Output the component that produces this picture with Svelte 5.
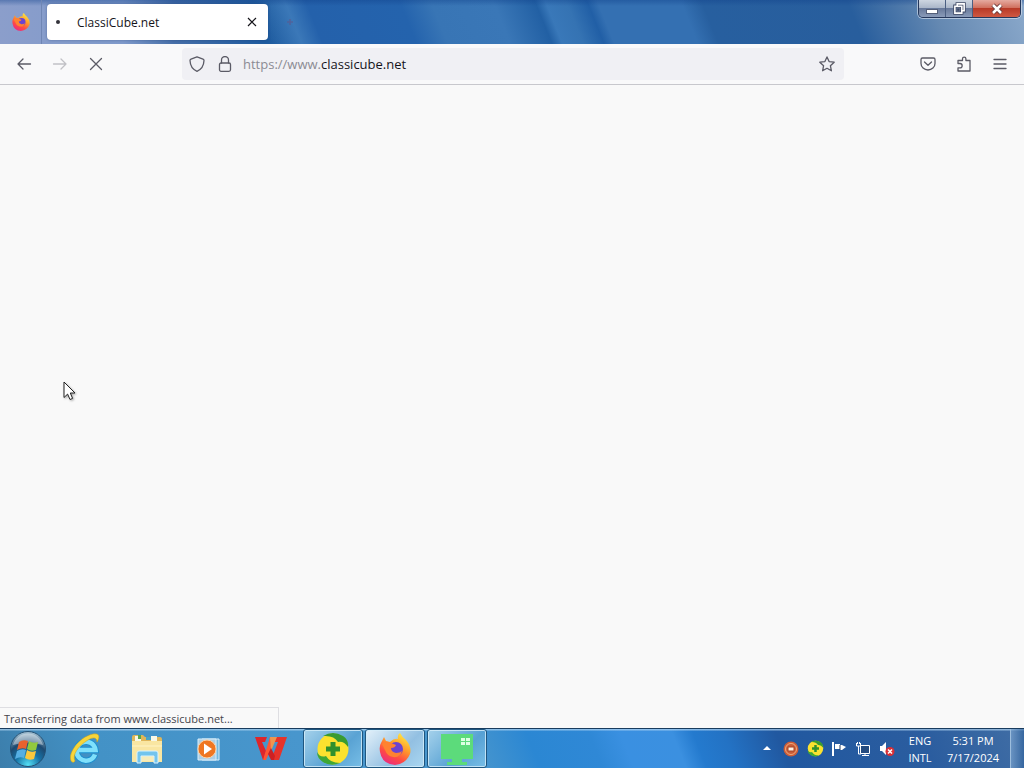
<script lang="ts">
    let tabTitle = $state("ClassiCube.net");
    let host = $state("classicube.net");
    let status = $state("Transferring data from www.classicube.net...");
</script>

<div class="desktop">
    <header class="titlebar">
        <button class="firefox-view" aria-label="Firefox View">
            {@render firefox(18)}
        </button>
        <div class="tab">
            <span class="throbber"></span>
            <span class="tab-title">{tabTitle}</span>
            <button class="tab-close" aria-label="Close tab">
                <svg width="10" height="10" viewBox="0 0 10 10" fill="none" stroke="#15141a" stroke-width="1.2">
                    <path d="M1 1l8 8M9 1L1 9" />
                </svg>
            </button>
        </div>
        <button class="new-tab" aria-label="New tab">
            <svg width="10" height="10" viewBox="0 0 10 10" stroke="#6a4f80" stroke-width="1.5">
                <path d="M5 2v6M2 5h6" />
            </svg>
        </button>
        <div class="window-controls">
            <button class="control" aria-label="Minimize">
                <svg width="14" height="14" viewBox="0 0 14 14">
                    <rect x="1.5" y="7.5" width="11" height="4" fill="#fff" stroke="#535e78" />
                </svg>
            </button>
            <button class="control" aria-label="Restore">
                <svg width="13" height="13" viewBox="0 0 14 14" fill="none">
                    <path d="M4.500 4V2h7.500v7.500h-2M2 4.500h7.500V12H2z" stroke="#414b66" stroke-width="3.500" />
                    <path d="M4.500 4V2h7.500v7.500h-2M2 4.500h7.500V12H2z" stroke="#fff" stroke-width="1.700" />
                    <path d="M4.500 7h2.500v2.500H4.500z" fill="#414b66" />
                </svg>
            </button>
            <button class="control close" aria-label="Close">
                <svg width="14" height="14" viewBox="0 0 14 14" fill="none">
                    <path d="M3 3l8 8M11 3l-8 8" stroke="#6b3838" stroke-width="4.5" />
                    <path d="M3 3l8 8M11 3l-8 8" stroke="#fff" stroke-width="2.5" />
                </svg>
            </button>
        </div>
    </header>

    <nav class="toolbar">
        <div class="nav-buttons">
            <button class="tool" aria-label="Back">
                <svg class="icon" viewBox="0 0 16 16"><path d="M14.500 8H2M7 3L2 8l5 5" /></svg>
            </button>
            <button class="tool" aria-label="Forward" disabled>
                <svg class="icon" viewBox="0 0 16 16"><path d="M1.500 8H14M9 3l5 5-5 5" /></svg>
            </button>
            <button class="tool" aria-label="Stop">
                <svg class="icon" viewBox="0 0 16 16"><path d="M2.500 2.500l11 11M13.500 2.500l-11 11" /></svg>
            </button>
        </div>
        <div class="urlbar">
            <button class="tool small" aria-label="Tracking protection">
                <svg class="icon" viewBox="0 0 16 16">
                    <path d="M8 .8l6 2.300c.8.3 1 .8 1 1.500C14.800 10 12.500 13.500 8 15.300 3.500 13.500 1.200 10 1 4.600c0-.7.2-1.200 1-1.500z" />
                </svg>
            </button>
            <button class="tool small" aria-label="Site information">
                <svg class="icon" viewBox="0 0 16 16">
                    <path d="M4.500 7V4a3.500 3.500 0 0 1 7 0v3" />
                    <rect x="2.500" y="7" width="11" height="8.300" rx="1.500" />
                </svg>
            </button>
            <label class="scheme" for="url">https://www.</label>
            <input id="url" type="text" bind:value={host} spellcheck="false" />
            <button class="tool small" aria-label="Bookmark this page">
                <svg class="icon" viewBox="0 0 16 16">
                    <path d="M8 .9l2.100 4.700 5.100.6-3.800 3.500 1 5.100L8 12.300l-4.400 2.500 1-5.100L.8 6.200l5.100-.6z" />
                </svg>
            </button>
        </div>
        <div class="menu-buttons">
            <button class="tool" aria-label="Save to Pocket">
                <svg class="icon" viewBox="0 0 16 16">
                    <path d="M2.500 2h11A1.500 1.500 0 0 1 15 3.500V7.500a7 6.500 0 0 1-14 0V3.500A1.500 1.500 0 0 1 2.500 2z" />
                    <path d="M4.500 6L8 9.300 11.500 6" />
                </svg>
            </button>
            <button class="tool" aria-label="Extensions">
                <svg class="icon" viewBox="0 0 16 16">
                    <path d="M2 7.500V4.500h4.500V2.800a1.700 1.700 0 0 1 3.400 0v1.700H14V15H2v-3.200h2a2.100 2.100 0 0 0 0-4.300z" />
                </svg>
            </button>
            <button class="tool" aria-label="Open application menu">
                <svg class="icon" viewBox="0 0 16 16"><path d="M2 3.500h12M2 8h12M2 12.500h12" /></svg>
            </button>
        </div>
    </nav>

    <main class="page">
        <svg class="cursor" width="14" height="21" viewBox="0 0 14 21">
            <path d="M1 1v15.500l3.600-3.400 2.400 5.400 2.600-1.100-2.300-5.400H12z" fill="#fff" stroke="#222" />
        </svg>
        <div class="status" role="status">{status}</div>
    </main>

    <footer class="taskbar">
        <button class="start" aria-label="Start">
            <svg width="38" height="38" viewBox="0 0 38 38">
                <defs>
                    <radialGradient id="orb" cx="50%" cy="95%" r="90%">
                        <stop offset="0" stop-color="#55e0f5" />
                        <stop offset=".4" stop-color="#1672a6" />
                        <stop offset=".7" stop-color="#1d4970" />
                        <stop offset="1" stop-color="#9bb9cc" />
                    </radialGradient>
                </defs>
                <circle cx="19" cy="19" r="17.500" fill="url(#orb)" stroke="#245073" />
                <path d="M4 15A15.500 15.500 0 0 1 34 15Q19 10 4 15z" fill="#fff" opacity=".4" />
                <path d="M10 12q4-3 9-1l-2 8q-4-2-9 1z" fill="#e9622d" />
                <path d="M20 11q4 3 9 1l-2 8q-5 2-9-1z" fill="#91c83e" />
                <path d="M8 21q5-3 9-1l-2 8q-4-2-9 1z" fill="#56afe4" />
                <path d="M18 20q4 3 9 1l-2 8q-5 2-9-1z" fill="#fbc83d" />
            </svg>
        </button>
        <div class="apps">
            <button class="app" aria-label="Internet Explorer">
                <svg width="32" height="32" viewBox="0 0 32 32" fill="none">
                    <path d="M26 21.500A9.500 9.500 0 1 1 26.500 17H9" stroke="#1b8fd0" stroke-width="6.500" />
                    <path d="M26 21.500A9.500 9.500 0 1 1 26.500 17H9" stroke="#7fe0fb" stroke-width="4.500" />
                    <path d="M3 29C-3 23 9 4 24 1c7-1 7 3 4 8 0-5-4-5-9-2C9 13 3 22 6 28q-1 2-3 1z" fill="#f7d53a" stroke="#c99e1d" stroke-width=".5" />
                </svg>
            </button>
            <button class="app" aria-label="Windows Explorer">
                <svg width="32" height="32" viewBox="0 0 32 32">
                    <path d="M1 4q0-2 2-2h9l2 2h15q2 0 2 2v20H1z" fill="#dfb65a" />
                    <path d="M4 3h6v6H4zM20 3h6v6h-6z" fill="#f8f8e8" />
                    <path d="M7 2h3v4H7z" fill="#58a64b" />
                    <path d="M15 4h5v3h-5z" fill="#49a3c6" />
                    <path d="M1 8h30v21H1z" fill="#f9e6a2" />
                    <path d="M1 13h30" stroke="#fff4c6" />
                    <path d="M6 30V20q0-2 2-2h17q2 0 2 2v10h-4v-7H10v7z" fill="#72c4ed" stroke="#d9f3ff" />
                    <path d="M11 24h11v4H11z" fill="#f6ebba" />
                </svg>
            </button>
            <button class="app" aria-label="Windows Media Player">
                <svg width="32" height="32" viewBox="0 0 32 32">
                    <path d="M9 6h17v21H9z" fill="#72b9df" stroke="#d9eefa" />
                    <path d="M5 6h18v21H5z" fill="#accee5" stroke="#d9eefa" />
                    <circle cx="14" cy="16" r="9" fill="#ef7621" stroke="#ffd2a3" />
                    <path d="M11 10.500v11l8-5.500z" fill="#fff" />
                </svg>
            </button>
            <button class="app" aria-label="WPS Office">
                <svg width="32" height="32" viewBox="0 0 32 32">
                    <path d="M0 4h12l-2 5H7l4 9-1 9H8z" fill="#dd262b" />
                    <path d="M20 4h12l-8 23h-8l7-18h-5z" fill="#e6332b" />
                    <path d="M15 4h6l-10 23H8z" fill="#ff5634" />
                    <path d="M15 4h7l-6 14z" fill="#ed9650" />
                    <path d="M16 15l4 8-1 4h-3l-3-6z" fill="#ce2022" />
                </svg>
            </button>
            <button class="app running" aria-label="360 Total Security">
                {@render shield(34)}
            </button>
            <button class="app running active" aria-label="Firefox">
                {@render firefox(32)}
            </button>
            <button class="app running" aria-label="Remote Desktop">
                <svg width="32" height="32" viewBox="0 0 32 32">
                    <path d="M0 1h32v25H21v3h5v3H6v-3h5v-3H0z" fill="#5cdb7b" />
                    <path d="M20 5h4v3h-4zM25 5h4v3h-4zM20 9h4v3h-4zM25 9h4v3h-4z" fill="#dcffe2" />
                </svg>
            </button>
        </div>
        <div class="tray">
            <button class="tray-icon" aria-label="Show hidden icons">
                <svg width="8" height="5" viewBox="0 0 8 5"><path d="M4 0l4 4H0z" fill="#fff" /></svg>
            </button>
            <button class="tray-icon" aria-label="Screen recorder">
                <svg width="16" height="16" viewBox="0 0 16 16">
                    <circle cx="8" cy="8" r="7.500" fill="#cb5c38" />
                    <circle cx="8" cy="8" r="5.500" fill="none" stroke="#efaa79" />
                    <path d="M5 6h6v4H5z" fill="#fff2e2" stroke="#a44426" />
                </svg>
            </button>
            <button class="tray-icon" aria-label="360 Total Security">
                {@render shield(17)}
            </button>
            <button class="tray-icon" aria-label="Action Center">
                <svg width="16" height="16" viewBox="0 0 16 16" fill="#fff">
                    <path d="M1 1h2v14H1zM4 3h5v1h2l4 2-4 3H9V8H4z" />
                    <path d="M9 4v5" stroke="#253b60" />
                </svg>
            </button>
            <button class="tray-icon" aria-label="Network">
                <svg width="16" height="16" viewBox="0 0 16 16" fill="none" stroke="#fff">
                    <path d="M5.500 4.500h9v8h-9z" fill="#244b80" />
                    <path d="M7 14.500h7M10 12.500v2" />
                    <path d="M1.500 2v3h4V2M2.500 1v2M4.500 1v2M3.500 5v8H6" />
                </svg>
            </button>
            <button class="tray-icon" aria-label="Volume muted">
                <svg width="16" height="16" viewBox="0 0 16 16">
                    <path d="M1 5h2l4-4v13l-4-4H1z" fill="#fff" />
                    <circle cx="11" cy="10.500" r="4.500" fill="#d92f36" />
                    <path d="M9 8.500l4 4M13 8.500l-4 4" stroke="#fff" stroke-width="1.500" />
                </svg>
            </button>
            <button class="tray-text language"><span>ENG</span><span>INTL</span></button>
            <button class="tray-text clock"><span>5:31 PM</span><span>7/17/2024</span></button>
            <button class="show-desktop" aria-label="Show desktop"></button>
        </div>
    </footer>
</div>

{#snippet firefox(size: number)}
    <svg width={size} height={size} viewBox="0 0 32 32">
        <defs>
            <linearGradient id="fox{size}" x1=".8" y1="0" x2=".25" y2="1">
                <stop offset="0" stop-color="#fff044" />
                <stop offset=".4" stop-color="#ff9a2b" />
                <stop offset=".7" stop-color="#ff4b43" />
                <stop offset="1" stop-color="#e82986" />
            </linearGradient>
        </defs>
        <path d="M2 10q2-4 3-6l2 4 4 1Q15 5 19 6q-1-4 2-6 2 4 6 7 6 7 4 14-4 10-15 11Q3 31 1 19 0 13 2 10z" fill="url(#fox{size})" />
        <circle cx="17" cy="16" r="7" fill="#6b43d0" />
        <path d="M3 11q4-4 9-1l5 2q-1 3-5 3 0 4 5 5 4 0 6-2-2 7-9 6-6-1-8-7z" fill="#ff8230" />
    </svg>
{/snippet}

<!-- round badge: yellow disc, two green swooshes, green plus -->
{#snippet shield(size: number)}
    <svg width={size} height={size} viewBox="0 0 34 34">
        <circle cx="17" cy="17" r="15.500" fill="#fbe22f" />
        <path d="M7 4Q17-2 27 4q6 4 5 11-4-6-10-5Q18 3 7 4z" fill="#3a9b32" />
        <path d="M1 20q3 6 9 4 4 7 14 7-9 4-17-1-6-4-6-10z" fill="#3fa736" />
        <path d="M14.500 10h5v4.500h4.500v5h-4.500v4.500h-5v-4.500H10v-5h4.500z" fill="#30902d" />
    </svg>
{/snippet}

<style>
    :global(body) {
        margin: 0;
    }

    .desktop {
        display: flex;
        flex-direction: column;
        height: 100vh;
        overflow: hidden;
        font-family: "Open Sans", "Noto Sans", sans-serif;
        font-size: 12px;
        color: #15141a;
    }

    button {
        display: flex;
        align-items: center;
        justify-content: center;
        box-sizing: border-box;
        padding: 0;
        border: none;
        background: none;
        color: inherit;
        font: inherit;
    }

    svg {
        display: block;
        flex-shrink: 0;
    }

    .titlebar {
        display: flex;
        flex-shrink: 0;
        height: 44px;
        background:
            linear-gradient(#10408a66, transparent 6px),
            linear-gradient(68deg, transparent 26%, #3b78b8 29%, #2461ab 31%, #2463ad 40%, #3875b5 43%, #3a77b7 49%, #2260a4 53%, #3978b9 54%, #3573b3 56%, #215fa6 58%, #3470b2 59%, #3470b2 67%, #275f9f 69%, #285e9d 83%, #6589b2 91%, #8ba9cb),
            linear-gradient(90deg, #8b9ecb, #7f9acb 12%, #466fa8 17%, #1f5c9f 26%, #2565af 40%);
    }

    .firefox-view {
        width: 42px;
        border-right: 1px solid #6f86b4;
    }

    .tab {
        display: flex;
        align-items: center;
        box-sizing: border-box;
        width: 221px;
        margin: 4px 0 4px 5px;
        padding: 0 8px;
        border-radius: 4px;
        background: #fff;
        box-shadow: 0 0 3px #0f2f6666;
    }

    .throbber {
        width: 4px;
        height: 4px;
        margin: 0 17px 0 1px;
        border-radius: 50%;
        background: #33323a;
    }

    .tab-title {
        flex: 1;
    }

    .tab-close {
        width: 16px;
        height: 24px;
    }

    .new-tab {
        width: 44px;
        opacity: 0.5;
    }

    .window-controls {
        display: flex;
        height: 17px;
        margin: 0 3px 0 auto;
        border: 1px solid #25375b;
        border-top: none;
        border-radius: 0 0 5px 5px;
        box-shadow: 0 0 0 1px #d4deedaa;
        overflow: hidden;
    }

    .control {
        width: 27px;
        border-right: 1px solid #4b5f82;
        background: linear-gradient(#ced6e1, #a9b5c8 48%, #68799a 50%, #8a9bb9);
    }

    .control.close {
        width: 47px;
        border-right: none;
        background: linear-gradient(#e5aaa0, #cf6d5b 48%, #b83a27 50%, #cf5842);
    }

    .toolbar {
        display: flex;
        align-items: center;
        flex-shrink: 0;
        height: 40px;
        padding: 0 6px;
        border-bottom: 1px solid #c8c8cd;
        background: #f9f9fa;
    }

    .nav-buttons,
    .menu-buttons {
        display: flex;
    }

    .tool {
        width: 36px;
        height: 32px;
    }

    .tool.small {
        width: 28px;
    }

    .tool:disabled {
        opacity: 0.35;
    }

    .icon {
        width: 16px;
        height: 16px;
        fill: none;
        stroke: #5b5b66;
        stroke-width: 1.3;
        stroke-linecap: round;
        stroke-linejoin: round;
    }

    .urlbar {
        display: flex;
        align-items: center;
        flex: 1;
        height: 32px;
        margin: 0 66px 0 68px;
        padding: 0 3px 0 1px;
        border-radius: 4px;
        background: #f0f0f4;
        font-size: 13px;
    }

    .scheme {
        margin-left: 4px;
        color: #8b8b93;
    }

    input {
        flex: 1;
        min-width: 0;
        padding: 0;
        border: none;
        outline: none;
        background: none;
        color: inherit;
        font: inherit;
    }

    .page {
        display: flex;
        flex: 1;
        align-items: flex-end;
        position: relative;
        background: #f9f9f9;
    }

    .cursor {
        position: absolute;
        top: 296px;
        left: 63px;
        filter: drop-shadow(1px 1px 1px #0005);
    }

    .status {
        box-sizing: border-box;
        min-width: 279px;
        padding: 2px 4px 0;
        border: 1px solid #dedee2;
        border-width: 1px 1px 0 0;
        background: #f9f9f9;
        color: #45454c;
        font-size: 11px;
        line-height: 18px;
    }

    .taskbar {
        display: flex;
        flex-shrink: 0;
        box-sizing: border-box;
        height: 40px;
        border-top: 1px solid #193c5e;
        background:
            linear-gradient(#b5d8f4aa 1px, transparent 2px),
            linear-gradient(68deg, #3c7eab, #4392c6 10%, #4896cd 30%, #4896cd 46%, #2b87d3 52%, #2f88d6 58%, #3a90e1 61%, #3b90e0 66%, #247ace 68%, #2372c4 71%, #2158a0 76%, #2b5d9f 90%, #416ea5);
    }

    .start {
        width: 55px;
    }

    .apps {
        display: flex;
        gap: 2px;
    }

    .app {
        width: 60px;
    }

    .app.running {
        border: 1px solid #1e5680;
        border-radius: 3px;
        background: linear-gradient(135deg, #b4dbf0dd, #65abd899 60%, #89cdf0bb);
        box-shadow: inset 0 0 0 1px #d4edfacc;
    }

    .app.active {
        background: linear-gradient(135deg, #eef7fdee, #a5cae7cc 60%, #b9e1f7dd);
    }

    .tray {
        display: flex;
        align-items: center;
        margin-left: auto;
        color: #fff;
    }

    .tray-icon {
        width: 24px;
        height: 38px;
    }

    .tray-text {
        flex-direction: column;
        font-size: 11px;
        line-height: 17px;
    }

    .language {
        width: 42px;
    }

    .clock {
        width: 64px;
    }

    .show-desktop {
        align-self: stretch;
        width: 14px;
        margin-left: 5px;
        border: 1px solid #9cbddd;
        border-width: 0 0 0 1px;
        background: linear-gradient(90deg, #7fa7d1aa, #31639daa);
    }
</style>
